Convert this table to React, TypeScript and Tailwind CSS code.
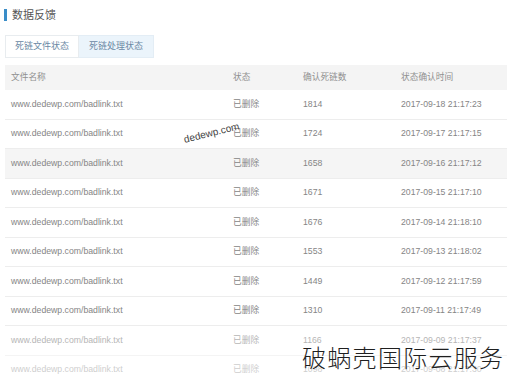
const rows = [
  { n: '1814', t: '2017-09-18 21:17:23' },
  { n: '1724', t: '2017-09-17 21:17:15' },
  { n: '1658', t: '2017-09-16 21:17:12', hover: true },
  { n: '1671', t: '2017-09-15 21:17:10' },
  { n: '1676', t: '2017-09-14 21:18:10' },
  { n: '1553', t: '2017-09-13 21:18:02' },
  { n: '1449', t: '2017-09-12 21:17:59' },
  { n: '1310', t: '2017-09-11 21:17:49' },
  { n: '1166', t: '2017-09-09 21:17:37', fade: 'opacity-60' },
  { n: '1098', t: '2017-09-08 21:17:30', fade: 'opacity-40' },
];

const cjk = { fontFamily: '"Liberation Sans", "Noto Sans CJK SC", sans-serif' };

export default function App() {
  return (
    <div className="relative w-[507px] h-[380px] overflow-hidden bg-white" style={cjk}>
      {/* Title */}
      <div className="flex items-center h-[12px] mt-[9px] ml-[4px] gap-[5px]">
        <div className="w-[3px] h-[12px] bg-[#3a8dc8]" />
        <span className="text-[11px] leading-none text-[#555]">数据反馈</span>
      </div>

      {/* Tabs */}
      <div className="flex mt-[14px] ml-[5px] h-[23px] text-[9px] text-[#6a88a4]">
        <div className="w-[74px] flex items-center justify-center border border-[#e8ecef] bg-white">死链文件状态</div>
        <div className="w-[75px] flex items-center justify-center border border-l-0 border-[#e3edf5] bg-[#ebf4fb]">死链处理状态</div>
      </div>

      {/* Table */}
      <div className="ml-[5px] mt-[7px] text-[#858585]">
        <div className="grid grid-cols-[222px_70px_98px_1fr] items-center h-[25px] pl-[6px] bg-[#f4f4f4] text-[8.7px] text-[#909090]">
          <span>文件名称</span>
          <span>状态</span>
          <span>确认死链数</span>
          <span>状态确认时间</span>
        </div>
        {rows.map((r) => (
          <div
            key={r.n}
            className={`grid grid-cols-[222px_70px_98px_1fr] items-center h-[29.5px] pl-[6px] border-b border-[#ededed] text-[8.7px] ${r.hover ? 'bg-[#f5f5f5]' : ''} ${r.fade ?? ''}`}
          >
            <span>www.dedewp.com/badlink.txt</span>
            <span>已删除</span>
            <span>{r.n}</span>
            <span>{r.t}</span>
          </div>
        ))}
      </div>

      {/* watermarks */}
      <span className="absolute left-[184px] top-[132px] text-[10px] text-[#444] -rotate-[14deg] origin-left">dedewp.com</span>
      <span
        className="absolute left-[302px] top-[345px] text-[24px] leading-none text-[#1f1f1f] tracking-[1.3px]"
        style={{ fontFamily: '"Noto Sans CJK SC", sans-serif', fontWeight: 300 }}
      >
        破蜗壳国际云服务
      </span>
    </div>
  );
}
